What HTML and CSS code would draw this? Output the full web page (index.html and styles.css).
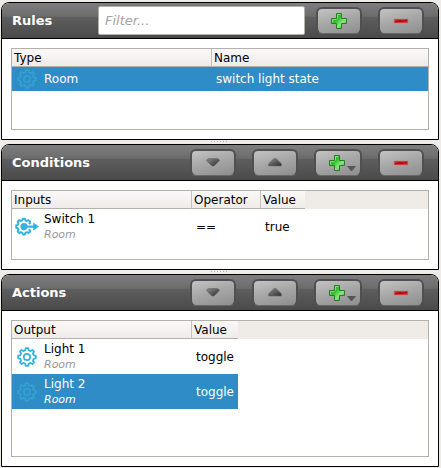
FILE: index.html
```
<!DOCTYPE html>
<html lang="en">
<head>
<meta charset="UTF-8">
<meta name="viewport" content="width=device-width, initial-scale=1.0">
<title>Rules</title>
<link rel="stylesheet" href="styles.css">
</head>
<body>
<svg class="defs" width="0" height="0" aria-hidden="true">
  <defs>
    <linearGradient id="green" x1="0" y1="0" x2="1" y2="1">
      <stop offset="0" stop-color="#3fae38"/>
      <stop offset="0.4" stop-color="#2fc32a"/>
      <stop offset="0.65" stop-color="#8be584"/>
      <stop offset="1" stop-color="#1fa51c"/>
    </linearGradient>
    <linearGradient id="red" x1="0" y1="0" x2="1" y2="0">
      <stop offset="0" stop-color="#e02222"/>
      <stop offset="0.45" stop-color="#b50f0f"/>
      <stop offset="0.6" stop-color="#dc1c1c"/>
      <stop offset="1" stop-color="#c92222"/>
    </linearGradient>
    <linearGradient id="grey" x1="0" y1="0" x2="1" y2="1">
      <stop offset="0" stop-color="#8a8a8a"/>
      <stop offset="1" stop-color="#2e2e2e"/>
    </linearGradient>
    <symbol id="gear" viewBox="0 0 20 20">
      <g fill="none" stroke="currentColor" stroke-linejoin="round">
        <path stroke-width="1.8" d="M8.4 3.2 L8.7 1.2 H11.3 L11.6 3.2 L13.7 4.1 L15.3 2.9 L17.1 4.7 L15.9 6.3 L16.8 8.4 L18.8 8.7 V11.3 L16.8 11.6 L15.9 13.7 L17.1 15.3 L15.3 17.1 L13.7 15.9 L11.6 16.8 L11.3 18.8 H8.7 L8.4 16.8 L6.3 15.9 L4.7 17.1 L2.9 15.3 L4.1 13.7 L3.2 11.6 L1.2 11.3 V8.7 L3.2 8.4 L4.1 6.3 L2.9 4.7 L4.7 2.9 L6.3 4.1 Z"/>
        <circle cx="10" cy="10" r="3.2" stroke-width="1.7"/>
      </g>
    </symbol>
    <symbol id="gear-out" viewBox="0 0 24 20">
      <path fill="none" stroke="currentColor" stroke-width="2" stroke-linejoin="round" d="M15.6 7 L14.4 6 L15 4.4 L13.4 3.2 L12 4 L10.4 3.3 L10 1.8 H7.8 L7.3 3.3 L5.7 4 L4.2 3.2 L2.7 4.7 L3.5 6.2 L2.8 7.8 L1.2 8.5 V10.7 L2.8 11.3 L3.5 13 L2.7 14.5 L4.2 16 L5.7 15.2 L7.3 15.9 L7.8 17.4 H10 L10.4 15.9 L12 15.2 L13.4 16 L15 14.7 L14.4 13.2 L15.6 12.4"/>
      <circle cx="9" cy="9.6" r="3.6" fill="currentColor"/>
      <path fill="currentColor" d="M9 8.5 H18.2 V5.5 L24 9.6 L18.2 13.7 V10.7 H9 Z"/>
    </symbol>
    <symbol id="plus" viewBox="0 0 16 16">
      <path fill="url(#green)" stroke="#2b7a28" stroke-width="1" d="M5.5 0.5 H10.5 V5.5 H15.5 V10.5 H10.5 V15.5 H5.5 V10.5 H0.5 V5.5 H5.5 Z"/>
      <path fill="none" stroke="#7fe07a" stroke-width="1" d="M6.5 5.5 V1.5 H9.5 M1.5 9.5 V6.5 H5.5"/>
    </symbol>
    <symbol id="minus" viewBox="0 0 16 16">
      <path fill="url(#red)" stroke="#cf4a4a" stroke-width="0.6" d="M1.3 6.3 H14.7 V9.7 H1.3 Z"/>
      <path fill="none" stroke="#8e0808" stroke-width="0.8" d="M2 9 L7 7.6 L9 8.6 L14 7.2"/>
    </symbol>
    <symbol id="down" viewBox="0 0 14 9">
      <path fill="url(#grey)" stroke="#666" stroke-width="0.6" d="M2.6 0.6 H11.4 L13.4 1.8 V2.8 L8 8 H6 L0.6 2.8 V1.8 Z"/>
    </symbol>
    <symbol id="up" viewBox="0 0 14 9">
      <path fill="url(#grey)" stroke="#666" stroke-width="0.6" d="M6 0.6 H8 L13.4 5.8 V8 H0.6 V5.8 Z"/>
    </symbol>
    <symbol id="caret" viewBox="0 0 9 5">
      <path fill="#555" d="M0 0 H9 L5 5 H4 Z"/>
    </symbol>
  </defs>
</svg>

<main class="editor">
  <section class="panel">
    <header class="bar">
      <h2>Rules</h2>
      <input class="filter" type="text" placeholder="Filter..." aria-label="Filter rules">
      <div class="tools">
        <button type="button" aria-label="Add rule"><svg class="icon"><use href="#plus"/></svg></button>
        <button type="button" aria-label="Remove rule"><svg class="icon"><use href="#minus"/></svg></button>
      </div>
    </header>
    <div class="list">
      <table class="rules">
        <colgroup><col class="col-type"><col></colgroup>
        <thead><tr><th>Type</th><th>Name</th></tr></thead>
        <tbody>
          <tr class="selected">
            <td><div class="item"><svg class="gear"><use href="#gear"/></svg><span>Room</span></div></td>
            <td>switch light state</td>
          </tr>
        </tbody>
      </table>
    </div>
  </section>

  <div class="splitter"></div>

  <section class="panel">
    <header class="bar">
      <h2>Conditions</h2>
      <div class="tools">
        <button type="button" aria-label="Move condition down"><svg class="arrow"><use href="#down"/></svg></button>
        <button type="button" aria-label="Move condition up"><svg class="arrow"><use href="#up"/></svg></button>
        <button type="button" class="menu" aria-label="Add condition"><svg class="icon"><use href="#plus"/></svg><svg class="caret"><use href="#caret"/></svg></button>
        <button type="button" aria-label="Remove condition"><svg class="icon"><use href="#minus"/></svg></button>
      </div>
    </header>
    <div class="list">
      <div class="head-fill">
        <table class="conditions">
          <colgroup><col class="col-item"><col class="col-operator"><col class="col-short"></colgroup>
          <thead><tr><th>Inputs</th><th>Operator</th><th>Value</th></tr></thead>
          <tbody>
            <tr class="tall">
              <td><div class="item"><svg class="gear wide"><use href="#gear-out"/></svg><span>Switch 1<small>Room</small></span></div></td>
              <td>==</td>
              <td>true</td>
            </tr>
          </tbody>
        </table>
      </div>
    </div>
  </section>

  <div class="splitter"></div>

  <section class="panel">
    <header class="bar">
      <h2>Actions</h2>
      <div class="tools">
        <button type="button" aria-label="Move action down"><svg class="arrow"><use href="#down"/></svg></button>
        <button type="button" aria-label="Move action up"><svg class="arrow"><use href="#up"/></svg></button>
        <button type="button" class="menu" aria-label="Add action"><svg class="icon"><use href="#plus"/></svg><svg class="caret"><use href="#caret"/></svg></button>
        <button type="button" aria-label="Remove action"><svg class="icon"><use href="#minus"/></svg></button>
      </div>
    </header>
    <div class="list">
      <div class="head-fill">
        <table class="actions">
          <colgroup><col class="col-item"><col class="col-value"></colgroup>
          <thead><tr><th>Output</th><th>Value</th></tr></thead>
          <tbody>
            <tr class="tall">
              <td><div class="item"><svg class="gear"><use href="#gear"/></svg><span>Light 1<small>Room</small></span></div></td>
              <td>toggle</td>
            </tr>
            <tr class="tall selected">
              <td><div class="item"><svg class="gear"><use href="#gear"/></svg><span>Light 2<small>Room</small></span></div></td>
              <td>toggle</td>
            </tr>
          </tbody>
        </table>
      </div>
    </div>
  </section>
</main>
</body>
</html>
```
FILE: styles.css
```
:root{--bg:#efebe7;--select:#308cc6;--accent:#34b4dc;--line:#b4b0ac}
*{box-sizing:border-box;margin:0;padding:0}
body{font-family:"DejaVu Sans",Verdana,sans-serif;font-size:12px;line-height:16px;color:#000;background:var(--bg)}
.defs{position:absolute}

.editor{display:grid;grid-template-rows:138fr 4px 126fr 4px 193fr;min-height:100vh;padding:2px 2px 1px 1px}
.splitter{justify-self:center;width:18px;height:1px;margin-top:1px;background:repeating-linear-gradient(90deg,#b9b5b1 0 1px,transparent 1px 3px)}

.panel{display:flex;flex-direction:column;border:1px solid #000;border-radius:8px 8px 0 0;background:#fff;overflow:hidden}
.bar{display:flex;align-items:center;height:36px;padding:0 14px 0 10px;border-bottom:1px solid #000;background:linear-gradient(#7e7e7e 0,#6c6c6c 38%,#5e5e5e 40%,#4a4a4a 100%)}
.bar h2{flex:none;font-size:13px;line-height:16px;color:#fff}
.filter{flex:1;min-width:0;height:29px;margin:0 11px 0 auto;padding:0 6px;border:1px solid #b4b0ac;border-radius:2px;background:#fff;font:inherit;font-size:13px}
.filter::placeholder{color:#a3a3a3;font-style:italic;opacity:1}
.bar:has(.filter) h2{width:86px}

.tools{display:flex;gap:16px;margin-left:auto}
.tools button{display:flex;align-items:center;justify-content:center;width:46px;height:27px;margin-bottom:1px;border:2px solid #505050;border-bottom:1px solid #686868;border-radius:6px;background:linear-gradient(165deg,#c4c4c4,#a8a8a8 45%,#8e8e8e);cursor:pointer}
.tools .menu{position:relative;width:48px}
.icon{width:16px;height:16px}
.arrow{width:14px;height:9px}
.menu .icon{margin-right:2px}
.caret{position:absolute;right:4px;bottom:4px;width:9px;height:5px}

.list{flex:1;margin:9px;border:1px solid var(--line);background:#fff}
.head-fill{background:linear-gradient(var(--bg) 18px,transparent 18px)}
table{table-layout:fixed;border-collapse:separate;border-spacing:0}
.rules{width:100%}
.conditions{width:293px}
.actions{width:226px}
.col-type{width:200px}
.col-item{width:180px}
.col-operator{width:69px}
.col-short{width:44px}
.col-value{width:46px}
th{height:18px;padding:0 3px 0 2px;border-right:1px solid #c6c1bc;border-bottom:1px solid var(--line);background:linear-gradient(#fbf9f8,#eeebe8);font-weight:normal;text-align:left;line-height:16px}
th:last-child{border-right:0}
td{height:24px;padding:0 4px;vertical-align:middle;white-space:nowrap}
td:first-child{padding-left:5px}
.tall td{height:35px}
.item{display:flex;align-items:center;gap:7px}
.item small{display:block;font-size:11px;line-height:16px;font-style:italic;color:#999}
.gear{flex:none;width:20px;height:20px;color:var(--accent)}
.gear.wide{width:24px;margin:0 -2px}
.selected{background:var(--select);color:#fff}
.selected .gear{opacity:.5}
.selected small{color:#fff}
```
